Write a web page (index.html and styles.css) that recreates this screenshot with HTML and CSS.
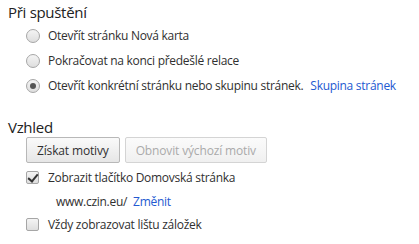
FILE: index.html
```html
<!DOCTYPE html>
<html>
<head>
    <meta charset="UTF-8">
    <title>Nastavení</title>
    <link rel="stylesheet" href="styles.css">
</head>
<body>
    <div class="settings">
        <section class="section startup">
            <h3 class="section-title">Při spuštění</h3>
            <div class="options">
                <label class="row"><input type="radio" name="startup"><span>Otevřít stránku Nová karta</span></label>
                <label class="row"><input type="radio" name="startup"><span>Pokračovat na konci předešlé relace</span></label>
                <label class="row"><input type="radio" name="startup" checked><span>Otevřít konkrétní stránku nebo skupinu stránek.</span><a href="#" class="link">Skupina stránek</a></label>
            </div>
        </section>

        <section class="section appearance">
            <h3 class="section-title">Vzhled</h3>
            <div class="options">
                <div class="buttons">
                    <button class="btn">Získat motivy</button>
                    <button class="btn" disabled>Obnovit výchozí motiv</button>
                </div>
                <label class="row"><input type="checkbox" checked><span>Zobrazit tlačítko Domovská stránka</span></label>
                <div class="row sub-row"><span>www.czin.eu/</span><a href="#" class="link">Změnit</a></div>
                <label class="row"><input type="checkbox"><span>Vždy zobrazovat lištu záložek</span></label>
            </div>
        </section>
    </div>
</body>
</html>
```

FILE: styles.css
```css
* {
    margin: 0;
    padding: 0;
    box-sizing: border-box;
}

body {
    background-color: #fff;
    font-family: "Open Sans", "Noto Sans", sans-serif;
    font-size: 12px;
    letter-spacing: -0.28px;
    color: #303030;
}

.settings {
    padding: 2px 8px 0;
}

.section-title {
    font-size: 15px;
    font-weight: normal;
    line-height: 21px;
    letter-spacing: -0.3px;
    color: #222;
}

.appearance {
    margin-top: 19px;
}

.options {
    padding-left: 18px;
    display: flex;
    flex-direction: column;
}

.row {
    display: flex;
    align-items: center;
    height: 25px;
    white-space: nowrap;
}

.row input {
    appearance: none;
    -webkit-appearance: none;
    width: 14px;
    height: 14px;
    margin-right: 8px;
    border: 1px solid #a6a6a6;
    background: linear-gradient(#f4f4f4, #dedede);
    flex-shrink: 0;
    position: relative;
}

.row input[type="radio"] {
    border-radius: 50%;
}

.row input[type="radio"]:checked::after {
    content: "";
    position: absolute;
    top: 3px;
    left: 3px;
    width: 6px;
    height: 6px;
    border-radius: 50%;
    background: #555;
}

.row input[type="checkbox"] {
    width: 13px;
    height: 13px;
    border-radius: 2px;
    margin-right: 9px;
}

.row input[type="checkbox"]:checked::after {
    content: "";
    position: absolute;
    left: 3px;
    top: 0px;
    width: 4px;
    height: 8px;
    border: solid #333;
    border-width: 0 2px 2px 0;
    transform: rotate(40deg);
}

.link {
    color: #2359d1;
    text-decoration: none;
    margin-left: 7px;
}

.buttons {
    display: flex;
    gap: 5px;
    margin-top: -1px;
    margin-bottom: 2px;
}

.btn {
    font-family: inherit;
    font-size: 12px;
    letter-spacing: -0.15px;
    color: #303030;
    height: 26px;
    padding: 0 10px;
    border: 1px solid #b8b8b8;
    border-radius: 2px;
    background: linear-gradient(#fafafa, #e6e6e6);
}

.btn:disabled {
    color: #aaa;
    border-color: #d4d4d4;
    background: linear-gradient(#fbfbfb, #f0f0f0);
}

.sub-row {
    padding-left: 30px;
    height: 22px;
}

.sub-row .link {
    margin-left: 6px;
}
```
